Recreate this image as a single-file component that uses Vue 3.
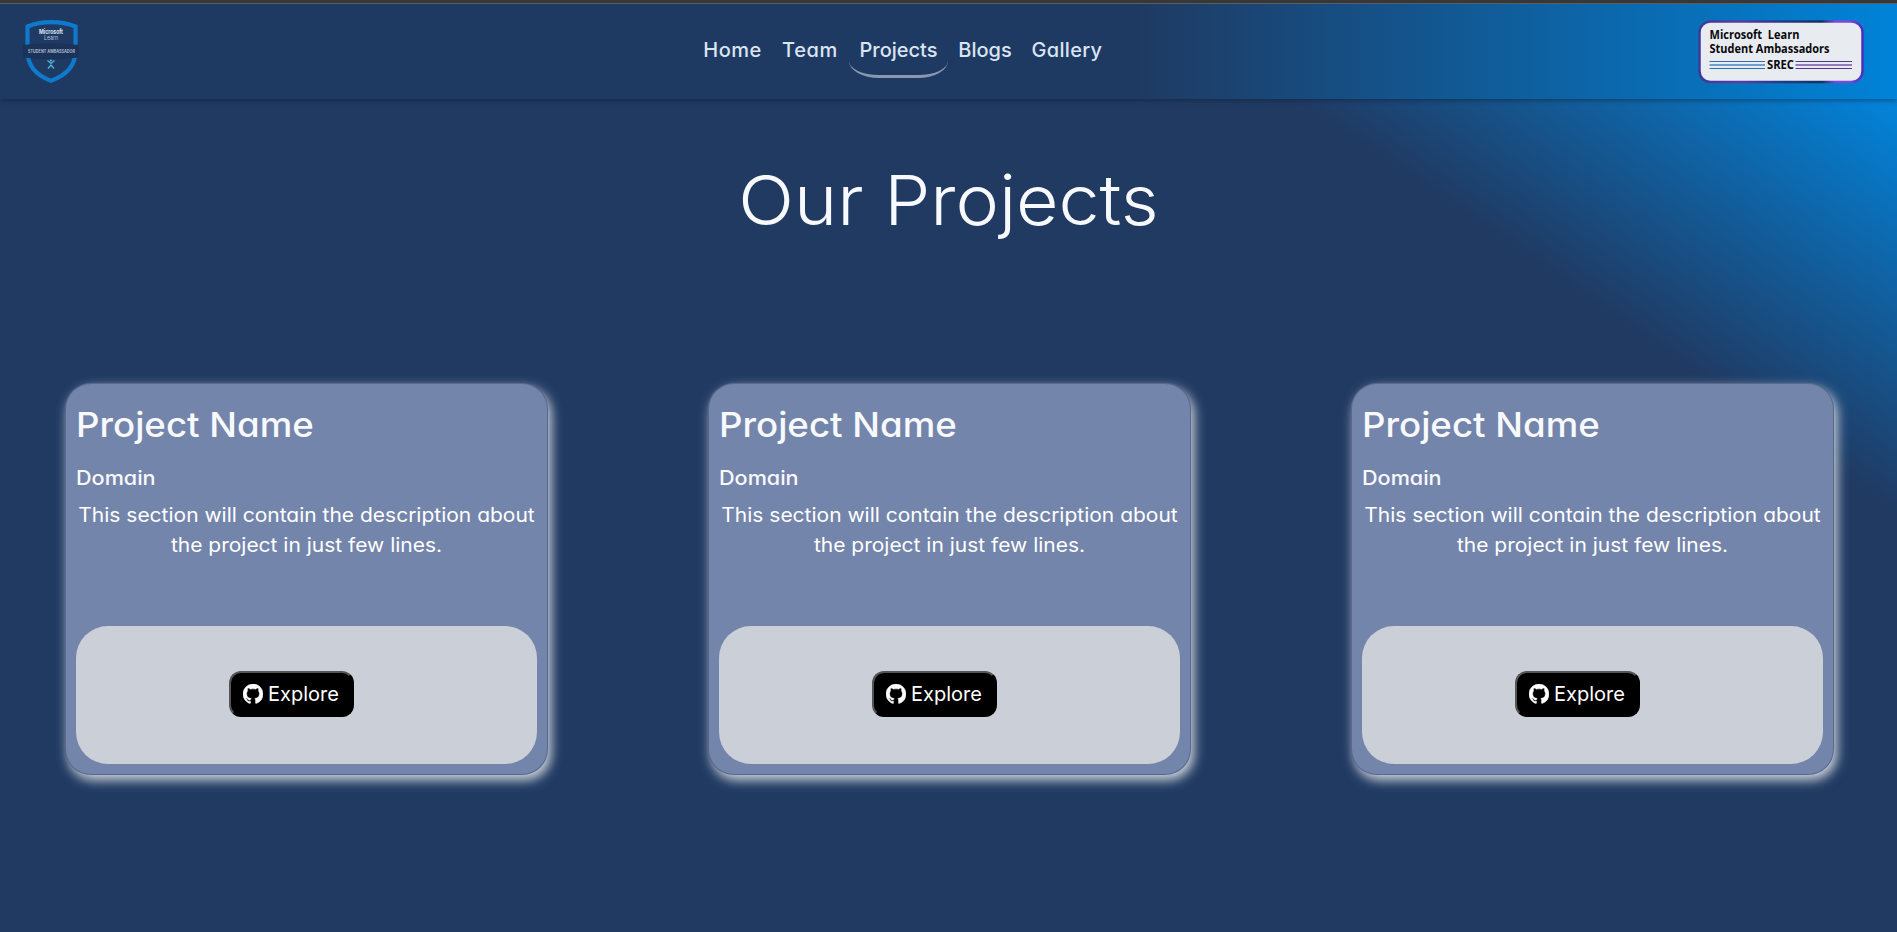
<script setup>
const links = ['Home', 'Team', 'Projects', 'Blogs', 'Gallery']
const active = 'Projects'
const projects = [1, 2, 3]
</script>

<template>
  <div class="page">
    <div class="strip"></div>
    <header class="navbar">
      <svg class="shield" width="60" height="66" viewBox="0 0 60 66">
        <path d="M30 2.200C39 2.200 48 4 54.500 6.500V31C54.500 47 43 56 30 60.800C17 56 6.500 47 6.500 31V6.500C13 4 21 2.200 30 2.200Z" fill="#1f3a63" stroke="#0f79cd" stroke-width="4.200" />
        <path d="M2 25Q30 21.500 58 25V37.500Q30 40.500 2 37.500Z" fill="#1b3259" />
        <text x="18" y="13.500" textLength="24" lengthAdjust="spacingAndGlyphs" class="ms">Microsoft</text>
        <text x="23" y="20" textLength="14" lengthAdjust="spacingAndGlyphs" class="learn">Learn</text>
        <text x="7" y="33" textLength="47" lengthAdjust="spacingAndGlyphs" class="band">STUDENT AMBASSADOR</text>
        <path d="M26.500 40.500L30 43.500L33.500 40.500M27 48.500L30 45L33 48.500" fill="none" stroke="#50b8d8" stroke-width="1.300" />
        <circle cx="30" cy="40.600" r="1.100" fill="#50b8d8" />
      </svg>
      <nav class="links">
        <a v-for="l in links" :key="l" :class="['link', l.toLowerCase(), { active: l === active }]">{{ l }}</a>
      </nav>
      <svg class="badge" width="166" height="64" viewBox="0 0 166 64">
        <defs>
          <linearGradient id="edge" x1="0" x2="1" y1="0" y2="0">
            <stop offset="0" stop-color="#3b3a9c" />
            <stop offset=".25" stop-color="#5b3aa6" />
            <stop offset=".5" stop-color="#243a86" />
            <stop offset=".75" stop-color="#143266" />
            <stop offset=".83" stop-color="#7a48dc" />
            <stop offset=".92" stop-color="#7a48dc" />
            <stop offset="1" stop-color="#4a30bd" />
          </linearGradient>
        </defs>
        <rect x="1.500" y="1.500" width="163" height="60.500" rx="11" fill="#e8ebf0" stroke="url(#edge)" stroke-width="2.500" />
        <text x="11.500" y="19" textLength="90" lengthAdjust="spacingAndGlyphs" class="bt">Microsoft&#160; Learn</text>
        <text x="11.500" y="32.500" textLength="120" lengthAdjust="spacingAndGlyphs" class="bt">Student Ambassadors</text>
        <text x="69" y="48.500" textLength="27" lengthAdjust="spacingAndGlyphs" class="bt">SREC</text>
        <path d="M11.500 41.500H67M11.500 48.500H67" stroke="#2f6fb4" />
        <path d="M11.500 45H67" stroke="#6f9fd0" stroke-width="1.800" />
        <path d="M97.500 41.500H154M97.500 48.500H154" stroke="#553a92" />
        <path d="M97.500 45H154" stroke="#9479bd" stroke-width="1.800" />
      </svg>
    </header>

    <main>
      <h1>Our Projects</h1>
      <section class="cards">
        <article v-for="p in projects" :key="p" class="card">
          <h2>Project Name</h2>
          <h3>Domain</h3>
          <p>This section will contain the description about<br />the project in just few lines.</p>
          <div class="panel">
            <button>
              <svg width="20" height="20" viewBox="0 0 16 16">
                <path fill="#fff" stroke="#fff" stroke-width=".35" d="M8 0C3.580 0 0 3.580 0 8c0 3.540 2.290 6.530 5.470 7.590.4.070.55-.17.55-.38 0-.19-.01-.82-.01-1.490-2.010.37-2.530-.49-2.690-.94-.09-.23-.48-.94-.82-1.130-.28-.15-.68-.52-.01-.53.63-.01 1.080.58 1.230.82.72 1.210 1.870.87 2.330.66.07-.52.28-.87.51-1.070-1.780-.2-3.640-.89-3.640-3.950 0-.87.31-1.590.82-2.150-.08-.2-.36-1.020.08-2.120 0 0 .67-.21 2.200.82.64-.18 1.320-.27 2-.27s1.360.09 2 .27c1.530-1.040 2.200-.82 2.200-.82.44 1.100.16 1.920.08 2.120.51.56.82 1.270.82 2.150 0 3.070-1.870 3.750-3.650 3.950.29.25.54.73.54 1.480 0 1.070-.01 1.930-.01 2.200 0 .21.15.46.55.38A8.010 8.010 0 0 0 16 8c0-4.420-3.580-8-8-8z" />
              </svg>
              <span>Explore</span>
            </button>
          </div>
        </article>
      </section>
    </main>
  </div>
</template>

<style>
body { overflow: hidden; background: #203a62; }
</style>

<style scoped>
* { box-sizing: border-box; }
.page {
  width: 100%;
  height: 932px;
  overflow: hidden;
  font-family: Inter, "Open Sans", sans-serif;
  font-feature-settings: "cv11", "ss03";
  color: #f8f9fc;
  background: linear-gradient(34.500deg, #203a62 77%, #008ae4 97%);
}
.strip { height: 4px; background: #383838; border-bottom: 1px solid #5a6468; }
.navbar {
  display: flex;
  align-items: flex-start;
  justify-content: space-between;
  height: 95px;
  padding: 16px 33px 0 21px;
  background: linear-gradient(90deg, #1f3a62 60%, #0083d8 100%);
  box-shadow: 0 2px 4px rgba(10, 25, 50, .4);
}
.shield { display: block; overflow: visible; }
.ms { font: 700 6px Inter, sans-serif; fill: #dfe8f4; }
.learn { font: 400 6px Inter, sans-serif; fill: #b5c6dc; }
.band { font: 700 4.800px Inter, sans-serif; fill: #a9b9d0; }
.bt { font: 700 12.500px "Open Sans", sans-serif; fill: #08090c; }
.links { display: flex; margin-left: 26px; margin-top: 10px; }
.link {
  width: 79px;
  height: 48px;
  line-height: 40px;
  text-align: center;
  white-space: nowrap;
  font-size: 20px;
  font-weight: 500;
  color: #dbe5f2;
}
.link.home { letter-spacing: .5px; }
.link.team { width: 77px; letter-spacing: .6px; text-indent: -1px; }
.link.projects { width: 99px; }
.link.blogs { width: 74px; }
.link.gallery { width: 90px; letter-spacing: .3px; }
.link.active { border-bottom: 3px solid #8997b3; border-radius: 30px / 17px; }
h1 {
  margin: 0;
  padding-top: 57px;
  height: 284px;
  text-align: center;
  font-size: 69px;
  line-height: 88px;
  font-weight: 300;
  transform: scaleX(1.063);
}
.cards { display: flex; gap: 160px; padding-left: 65px; }
.card {
  flex: none;
  width: 483px;
  height: 392px;
  padding: 10px;
  border: 1px solid rgba(60, 75, 115, .5);
  border-radius: 26px;
  background: #7485ab;
  box-shadow: 3px 5px 12px #d3d8de;
}
h2, h3 { transform-origin: left; }
h2 { margin: 6px 0 0; font-size: 34px; line-height: 50px; font-weight: 500; transform: scaleX(1.078); }
h3 { margin: 13px 0 0; font-size: 20px; line-height: 30px; font-weight: 500; transform: scaleX(1.08); }
p { margin: 7px 0 0; text-align: center; font-size: 19.500px; line-height: 30px; white-space: nowrap; color: #fff; transform: scaleX(1.076); }
.panel {
  display: flex;
  align-items: center;
  height: 138px;
  margin-top: 66px;
  padding: 0 0 2px 153px;
  border-radius: 32px;
  background: #cbcfd8;
}
button {
  display: flex;
  align-items: center;
  gap: 5px;
  width: 125px;
  height: 46px;
  padding: 0 0 0 12px;
  border: 2px solid #000;
  border-top-color: #555;
  border-left-color: #555;
  border-radius: 12px;
  background: #000;
  color: #fff;
  font: 400 20px Inter, sans-serif;
}
button svg { flex: none; }
</style>
